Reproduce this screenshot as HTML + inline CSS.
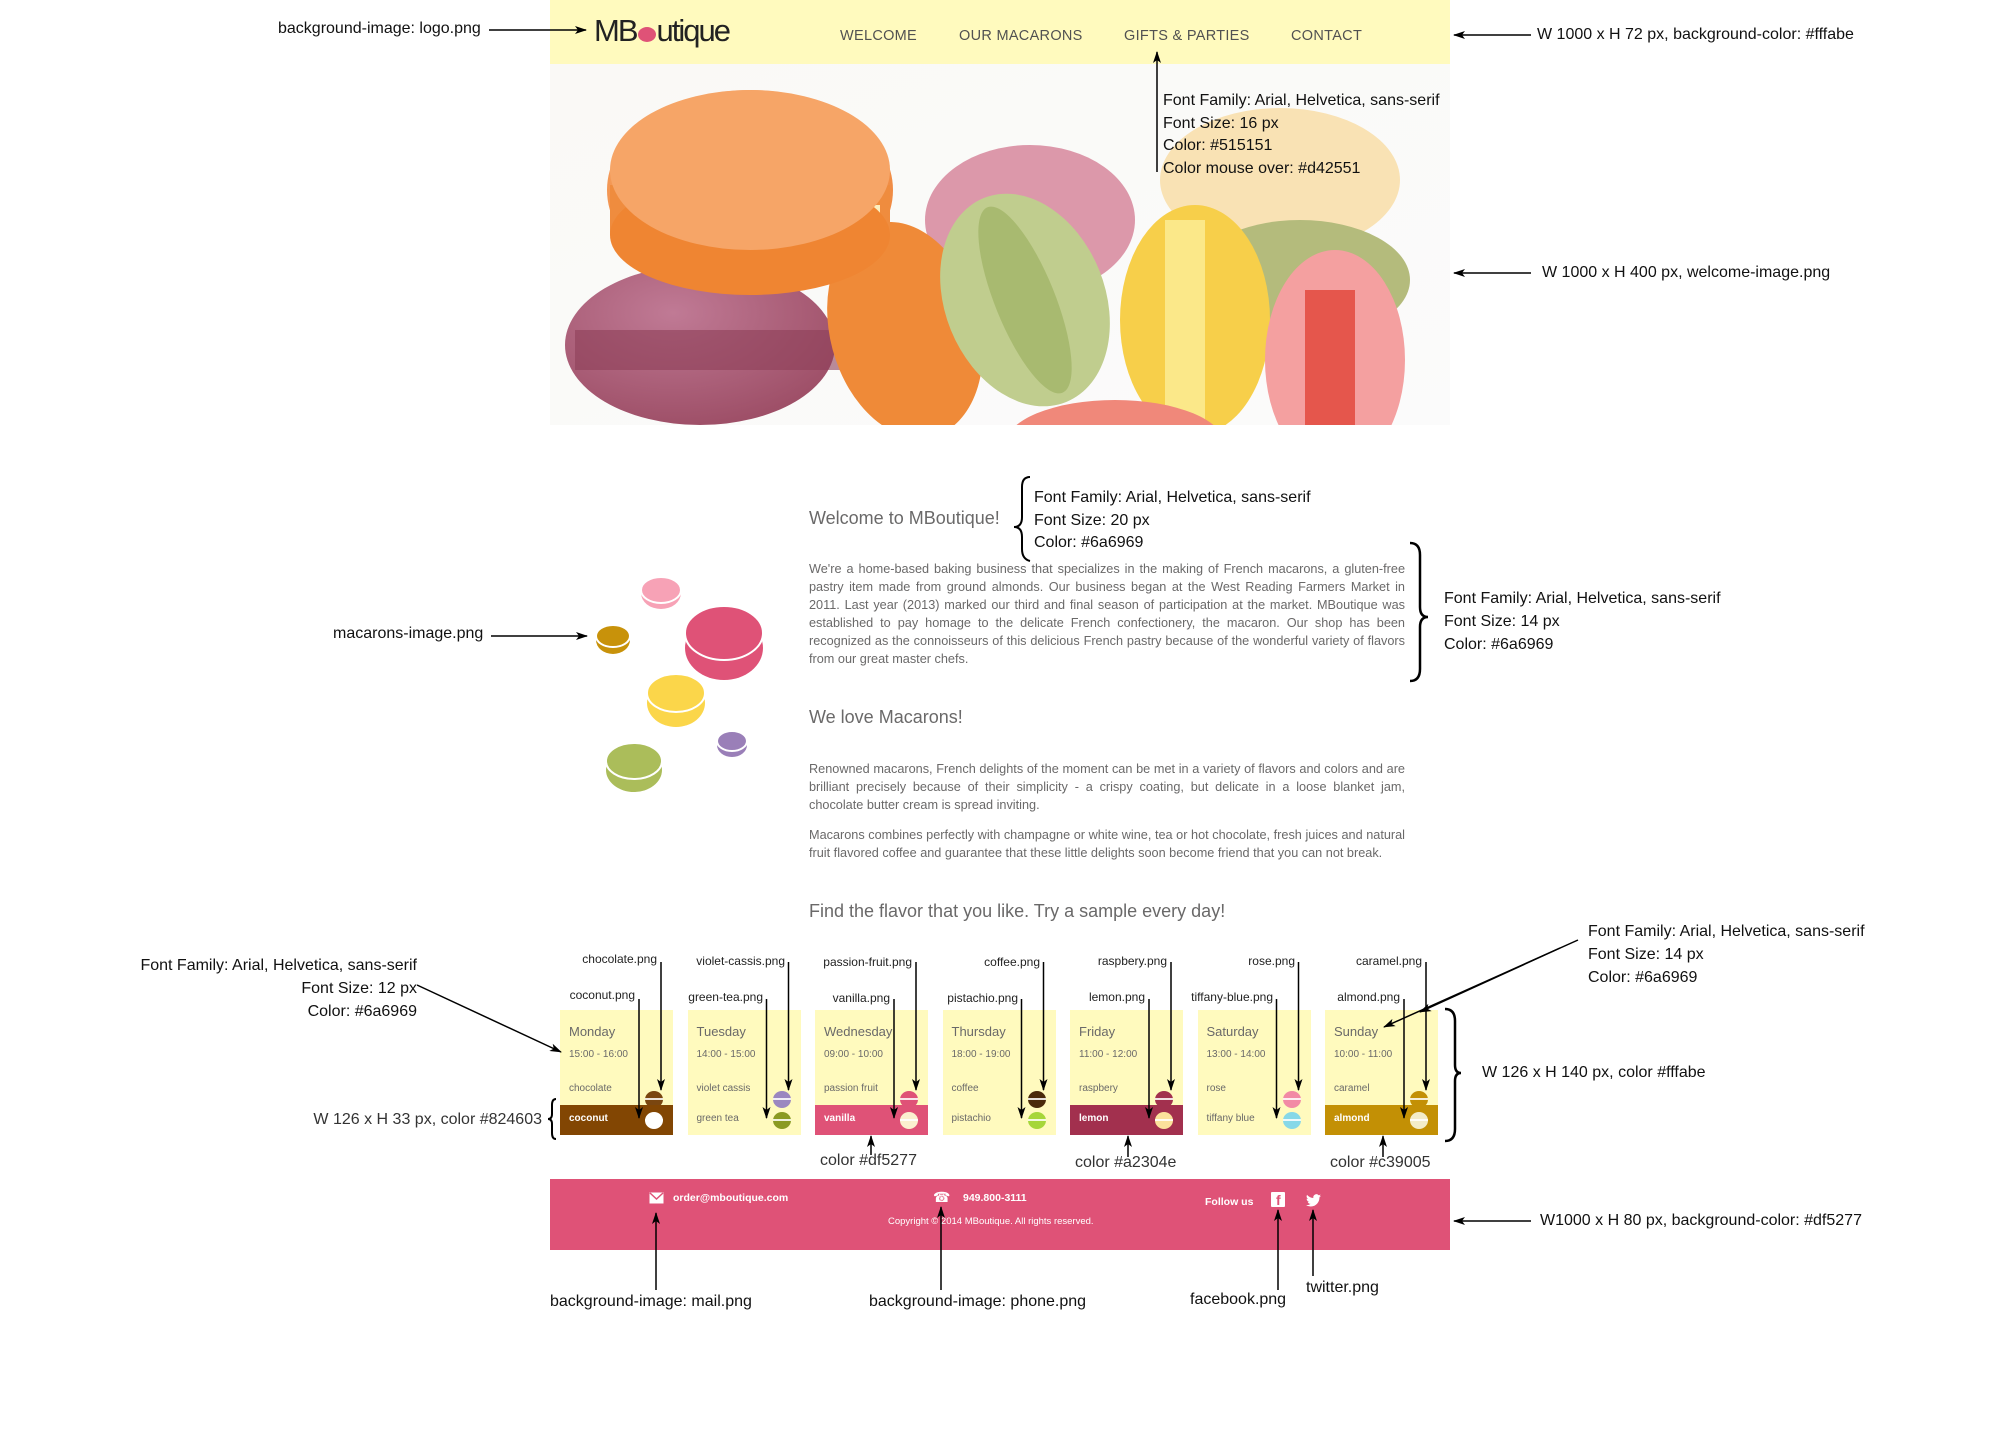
<!DOCTYPE html>
<html><head><meta charset="utf-8"><style>
*{margin:0;padding:0;box-sizing:border-box}
body{width:2000px;height:1440px;position:relative;background:#fff;font-family:"Liberation Sans",Arial,sans-serif;overflow:hidden}
.a{position:absolute;white-space:nowrap;color:#111;font-size:16px;line-height:20px}
.g{color:#6a6969}
.nav{position:absolute;top:28px;font-size:14.5px;color:#515151;letter-spacing:.3px}
p.t{position:absolute;left:809px;width:596px;font-size:12.7px;line-height:18px;color:#6a6969;text-align:justify}
.card{position:absolute;top:1010px;width:113px;height:125px;background:#fffabe;color:#6a6969}
.card .d{position:absolute;left:9px;top:14px;font-size:13px}
.card .h{position:absolute;left:9px;top:39px;font-size:10px}
.card .f1{position:absolute;left:9px;top:73px;font-size:10px}
.card .band{position:absolute;left:0;bottom:0;width:113px;height:30px}
.card .f2{position:absolute;left:9px;top:103px;font-size:10px}
.m{position:absolute;left:85px;width:18px;height:17px;border-radius:50%}
.m:after{content:"";position:absolute;left:0;right:0;top:7px;height:2px;background:rgba(255,255,255,.85)}
.lb{position:absolute;font-size:12px;color:#222;text-align:right;white-space:nowrap}
</style></head><body>

<!-- header -->
<div style="position:absolute;left:550px;top:0;width:900px;height:64px;background:#fffabe"></div>
<div class="a" style="left:594px;top:12px;font-size:31px;line-height:38px;color:#222;letter-spacing:-2px">MB<span style="display:inline-block;width:18px;height:15px;border-radius:50%;background:#df5277;vertical-align:-1px;margin:0 1px"></span>utique</div>
<div class="nav" style="left:840px">WELCOME</div>
<div class="nav" style="left:959px">OUR MACARONS</div>
<div class="nav" style="left:1124px">GIFTS &amp; PARTIES</div>
<div class="nav" style="left:1291px">CONTACT</div>

<!-- hero -->
<svg style="position:absolute;left:550px;top:64px" width="900" height="361" viewBox="550 64 900 361">
<defs>
<linearGradient id="bg" x1="0" y1="0" x2="1" y2="1"><stop offset="0" stop-color="#faf9f6"/><stop offset="1" stop-color="#fbfbfb"/></linearGradient>
<radialGradient id="or" cx=".4" cy=".3" r=".8"><stop offset="0" stop-color="#f9b27a"/><stop offset="1" stop-color="#ee8236"/></radialGradient>
<radialGradient id="pu" cx=".4" cy=".3" r=".8"><stop offset="0" stop-color="#c07a95"/><stop offset="1" stop-color="#9a4a62"/></radialGradient>
</defs>
<rect x="550" y="64" width="900" height="361" fill="url(#bg)"/>
<ellipse cx="1280" cy="180" rx="120" ry="72" fill="#f9e2b4"/>
<ellipse cx="1300" cy="280" rx="110" ry="60" fill="#b4bb7c"/>
<ellipse cx="1030" cy="220" rx="105" ry="75" fill="#dc98aa"/>
<ellipse cx="700" cy="345" rx="135" ry="80" fill="url(#pu)"/>
<rect x="575" y="330" width="265" height="40" fill="#8e3f59" opacity=".6"/>
<ellipse cx="905" cy="330" rx="75" ry="110" fill="#ef8a38" transform="rotate(-15 905 330)"/>
<ellipse cx="1025" cy="300" rx="80" ry="110" fill="#c0cd8e" transform="rotate(-22 1025 300)"/>
<ellipse cx="1025" cy="300" rx="30" ry="100" fill="#a8ba70" transform="rotate(-22 1025 300)"/>
<ellipse cx="1195" cy="320" rx="75" ry="115" fill="#f7cf4a"/>
<rect x="1165" y="220" width="40" height="205" fill="#fbe889"/>
<ellipse cx="1335" cy="360" rx="70" ry="110" fill="#f4a0a0"/>
<rect x="1305" y="290" width="50" height="135" fill="#e5564c"/>
<ellipse cx="1115" cy="445" rx="110" ry="45" fill="#f0887a"/>
<ellipse cx="750" cy="190" rx="143" ry="100" fill="url(#or)"/>
<rect x="610" y="185" width="280" height="50" fill="#ef8c3e"/>
<rect x="680" y="205" width="200" height="8" fill="#fbeec0"/>
<ellipse cx="750" cy="235" rx="140" ry="60" fill="#ef8532"/>
<ellipse cx="750" cy="170" rx="140" ry="80" fill="#f6a567"/>
</svg>

<!-- annotation text -->
<div class="a" style="left:278px;top:19px">background-image: logo.png</div>
<div class="a" style="left:1537px;top:25px">W 1000 x H 72 px, background-color: #fffabe</div>
<div class="a" style="left:1163px;top:90px;line-height:22.7px">Font Family: Arial, Helvetica, sans-serif<br>Font Size: 16 px<br>Color: #515151<br>Color mouse over: #d42551</div>
<div class="a" style="left:1542px;top:263px">W 1000 x H 400 px, welcome-image.png</div>
<div class="a" style="left:1034px;top:487px;line-height:22.5px">Font Family: Arial, Helvetica, sans-serif<br>Font Size: 20 px<br>Color: #6a6969</div>
<div class="a" style="left:1444px;top:587px;line-height:23px">Font Family: Arial, Helvetica, sans-serif<br>Font Size: 14 px<br>Color: #6a6969</div>
<div class="a" style="left:333px;top:624px">macarons-image.png</div>
<div class="a" style="left:140px;top:954px;width:277px;text-align:right;line-height:23px;white-space:normal">Font Family: Arial, Helvetica, sans-serif<br>Font Size: 12 px<br>Color: #6a6969</div>
<div class="a" style="left:312px;top:1110px;width:230px;text-align:right;color:#333">W 126 x H 33 px, color #824603</div>
<div class="a" style="left:1588px;top:920px;line-height:23px">Font Family: Arial, Helvetica, sans-serif<br>Font Size: 14 px<br>Color: #6a6969</div>
<div class="a" style="left:1482px;top:1063px">W 126 x H 140 px, color #fffabe</div>
<div class="a" style="left:820px;top:1151px;color:#333">color #df5277</div>
<div class="a" style="left:1075px;top:1153px;color:#333">color #a2304e</div>
<div class="a" style="left:1330px;top:1153px;color:#333">color #c39005</div>
<div class="a" style="left:1540px;top:1211px">W1000 x H 80 px, background-color: #df5277</div>
<div class="a" style="left:550px;top:1292px">background-image: mail.png</div>
<div class="a" style="left:869px;top:1292px">background-image: phone.png</div>
<div class="a" style="left:1190px;top:1290px">facebook.png</div>
<div class="a" style="left:1306px;top:1278px">twitter.png</div>

<!-- content -->
<div class="a g" style="left:809px;top:507px;font-size:18px;line-height:22px">Welcome to MBoutique!</div>
<p class="t" style="top:560px">We're a home-based baking business that specializes in the making of French macarons, a gluten-free pastry item made from ground almonds. Our business began at the West Reading Farmers Market in 2011. Last year (2013) marked our third and final season of participation at the market. MBoutique was established to pay homage to the delicate French confectionery, the macaron. Our shop has been recognized as the connoisseurs of this delicious French pastry because of the wonderful variety of flavors from our great master chefs.</p>
<div class="a g" style="left:809px;top:706px;font-size:18px;line-height:22px">We love Macarons!</div>
<p class="t" style="top:760px">Renowned macarons, French delights of the moment can be met in a variety of flavors and colors and are brilliant precisely because of their simplicity - a crispy coating, but delicate in a loose blanket jam, chocolate butter cream is spread inviting.</p>
<p class="t" style="top:826px">Macarons combines perfectly with champagne or white wine, tea or hot chocolate, fresh juices and natural fruit flavored coffee and guarantee that these little delights soon become friend that you can not break.</p>
<div class="a g" style="left:809px;top:900px;font-size:18px;line-height:22px">Find the flavor that you like. Try a sample every day!</div>

<!-- macarons image -->
<svg style="position:absolute;left:580px;top:560px" width="200" height="240" viewBox="580 560 200 240">
<ellipse cx="661" cy="593" rx="20" ry="16" fill="#f7a2b6"/><ellipse cx="661" cy="590" rx="20" ry="13" fill="#f7a2b6" stroke="#fff" stroke-width="2"/>
<ellipse cx="613" cy="640" rx="17" ry="14" fill="#c8920a"/><ellipse cx="613" cy="636" rx="17" ry="11" fill="#c8920a" stroke="#fff" stroke-width="2"/>
<ellipse cx="724" cy="648" rx="39" ry="32" fill="#df5277"/><ellipse cx="724" cy="633" rx="39" ry="27" fill="#df5277" stroke="#fff" stroke-width="2"/>
<ellipse cx="676" cy="703" rx="29" ry="24" fill="#fbd64a"/><ellipse cx="676" cy="693" rx="29" ry="19" fill="#fbd64a" stroke="#fff" stroke-width="2"/>
<ellipse cx="732" cy="745" rx="15" ry="12" fill="#9a7fb8"/><ellipse cx="732" cy="741" rx="15" ry="10" fill="#9a7fb8" stroke="#fff" stroke-width="2"/>
<ellipse cx="634" cy="770" rx="28" ry="22" fill="#abbd5a"/><ellipse cx="634" cy="761" rx="28" ry="18" fill="#abbd5a" stroke="#fff" stroke-width="2"/>
</svg>

<!-- cards -->
<div class="card" style="left:560px"><div class="d">Monday</div><div class="h">15:00 - 16:00</div><div class="f1">chocolate</div><div class="m" style="top:81px;background:#7a4610"></div><div class="band" style="background:#824603"></div><div class="f2" style="color:#fff;font-weight:bold">coconut</div><div class="m" style="top:102px;background:#fff"></div></div>
<div class="card" style="left:687.5px"><div class="d">Tuesday</div><div class="h">14:00 - 15:00</div><div class="f1">violet cassis</div><div class="m" style="top:81px;background:#9b87c0"></div><div class="f2">green tea</div><div class="m" style="top:102px;background:#8a9a23"></div></div>
<div class="card" style="left:815px"><div class="d">Wednesday</div><div class="h">09:00 - 10:00</div><div class="f1">passion fruit</div><div class="m" style="top:81px;background:#df5277"></div><div class="band" style="background:#df5277"></div><div class="f2" style="color:#fff;font-weight:bold">vanilla</div><div class="m" style="top:102px;background:#fbf0cf"></div></div>
<div class="card" style="left:942.5px"><div class="d">Thursday</div><div class="h">18:00 - 19:00</div><div class="f1">coffee</div><div class="m" style="top:81px;background:#4a2a0a"></div><div class="f2">pistachio</div><div class="m" style="top:102px;background:#a6d63a"></div></div>
<div class="card" style="left:1070px"><div class="d">Friday</div><div class="h">11:00 - 12:00</div><div class="f1">raspbery</div><div class="m" style="top:81px;background:#a2304e"></div><div class="band" style="background:#a2304e"></div><div class="f2" style="color:#fff;font-weight:bold">lemon</div><div class="m" style="top:102px;background:#fbe19b"></div></div>
<div class="card" style="left:1197.5px"><div class="d">Saturday</div><div class="h">13:00 - 14:00</div><div class="f1">rose</div><div class="m" style="top:81px;background:#f28aa5"></div><div class="f2">tiffany blue</div><div class="m" style="top:102px;background:#86d8e8"></div></div>
<div class="card" style="left:1325px"><div class="d">Sunday</div><div class="h">10:00 - 11:00</div><div class="f1">caramel</div><div class="m" style="top:81px;background:#c39005"></div><div class="band" style="background:#c39005"></div><div class="f2" style="color:#fff;font-weight:bold">almond</div><div class="m" style="top:102px;background:#f3ecc9"></div></div>

<!-- card labels -->
<div class="lb" style="right:1343px;top:952px">chocolate.png</div><div class="lb" style="right:1365px;top:988px">coconut.png</div>
<div class="lb" style="right:1215px;top:954px">violet-cassis.png</div><div class="lb" style="right:1237px;top:990px">green-tea.png</div>
<div class="lb" style="right:1088px;top:955px">passion-fruit.png</div><div class="lb" style="right:1110px;top:991px">vanilla.png</div>
<div class="lb" style="right:960px;top:955px">coffee.png</div><div class="lb" style="right:982px;top:991px">pistachio.png</div>
<div class="lb" style="right:833px;top:954px">raspbery.png</div><div class="lb" style="right:855px;top:990px">lemon.png</div>
<div class="lb" style="right:705px;top:954px">rose.png</div><div class="lb" style="right:727px;top:990px">tiffany-blue.png</div>
<div class="lb" style="right:578px;top:954px">caramel.png</div><div class="lb" style="right:600px;top:990px">almond.png</div>

<!-- footer -->
<div style="position:absolute;left:550px;top:1179px;width:900px;height:71px;background:#df5277"></div>
<svg style="position:absolute;left:649px;top:1192px" width="15" height="12"><rect x="0.5" y="0.5" width="14" height="11" fill="#fff"/><path d="M1 1 L7.5 7 L14 1" stroke="#df5277" fill="none" stroke-width="1.5"/></svg>
<div class="a" style="left:673px;top:1192px;font-size:10.5px;line-height:13px;color:#fff;font-weight:bold">order@mboutique.com</div>
<div class="a" style="left:933px;top:1190px;font-size:14px;line-height:15px;color:#fff">☎</div>
<div class="a" style="left:963px;top:1192px;font-size:10.5px;line-height:13px;color:#fff;font-weight:bold">949.800-3111</div>
<div class="a" style="left:888px;top:1216px;font-size:9.5px;line-height:12px;color:#fff">Copyright © 2014 MBoutique. All rights reserved.</div>
<div class="a" style="left:1205px;top:1196px;font-size:10.5px;line-height:13px;color:#fff;font-weight:bold">Follow us</div>
<div style="position:absolute;left:1271px;top:1192px;width:14px;height:15px;background:#fff;border-radius:1px"><span style="position:absolute;left:5px;top:0;font:bold 14px 'Liberation Sans';color:#df5277;line-height:17px">f</span></div>
<svg style="position:absolute;left:1306px;top:1194px" width="15" height="13" viewBox="0 0 24 20"><path fill="#fff" d="M24 2.4a9.8 9.8 0 0 1-2.8.8A4.9 4.9 0 0 0 23.3.4a9.9 9.9 0 0 1-3.1 1.2A4.9 4.9 0 0 0 11.8 6 14 14 0 0 1 1.7.9a4.9 4.9 0 0 0 1.5 6.6A4.9 4.9 0 0 1 1 6.9 4.9 4.9 0 0 0 4.9 11.8a4.9 4.9 0 0 1-2.2.1 4.9 4.9 0 0 0 4.6 3.4A9.9 9.9 0 0 1 0 17.3 14 14 0 0 0 7.5 19.5c9.1 0 14-7.5 14-14v-.6A10 10 0 0 0 24 2.4z"/></svg>

<!-- annotation overlay lines (on top) -->
<svg style="position:absolute;left:0;top:0;z-index:10" width="2000" height="1440" fill="none" stroke="#000" stroke-width="1.5">
<defs><marker id="ar" markerWidth="12" markerHeight="8" refX="11" refY="4" orient="auto" markerUnits="userSpaceOnUse"><path d="M0,0 L12,4 L0,8 L3,4 Z" fill="#000" stroke="none"/></marker></defs>
<line x1="489" y1="30" x2="586" y2="30" marker-end="url(#ar)"/>
<line x1="1531" y1="35" x2="1454" y2="35" marker-end="url(#ar)"/>
<line x1="1157" y1="172" x2="1157" y2="52" marker-end="url(#ar)"/>
<line x1="1531" y1="273" x2="1454" y2="273" marker-end="url(#ar)"/>
<line x1="491" y1="636" x2="587" y2="636" marker-end="url(#ar)"/>
<path d="M1030 477 q-8 0 -8 10 v30 q0 10 -8 10 q8 0 8 10 v12 q0 10 8 12" stroke-width="2"/>
<path d="M1410 543 q10 0 10 12 v52 q0 10 8 10 q-8 0 -8 10 v42 q0 12 -10 12" stroke-width="2.5"/>
<line x1="417" y1="985" x2="561" y2="1052" marker-end="url(#ar)"/>
<line x1="1578" y1="940" x2="1384" y2="1027" marker-end="url(#ar)"/>
<line x1="1560" y1="948" x2="1420" y2="1012" marker-end="url(#ar)"/>
<path d="M556 1099 q-4 0 -4 6 v9 q0 5 -4 5 q4 0 4 5 v9 q0 6 4 6" stroke-width="2"/>
<path d="M1445 1009 q10 0 10 12 v44 q0 8 6 8 q-6 0 -6 8 v48 q0 12 -10 12" stroke-width="2.5"/>
<line x1="871" y1="1155" x2="871" y2="1136" marker-end="url(#ar)"/>
<line x1="1128" y1="1157" x2="1128" y2="1136" marker-end="url(#ar)"/>
<line x1="1383" y1="1157" x2="1383" y2="1136" marker-end="url(#ar)"/>
<line x1="656" y1="1290" x2="656" y2="1213" marker-end="url(#ar)"/>
<line x1="941" y1="1290" x2="941" y2="1207" marker-end="url(#ar)"/>
<line x1="1278" y1="1290" x2="1278" y2="1210" marker-end="url(#ar)"/>
<line x1="1313" y1="1276" x2="1313" y2="1210" marker-end="url(#ar)"/>
<line x1="1531" y1="1221" x2="1454" y2="1221" marker-end="url(#ar)"/>
<g>
<line x1="661" y1="962" x2="661" y2="1090" marker-end="url(#ar)"/><line x1="639" y1="999" x2="639" y2="1118" marker-end="url(#ar)"/>
<line x1="788.5" y1="962" x2="788.5" y2="1090" marker-end="url(#ar)"/><line x1="766.5" y1="999" x2="766.5" y2="1118" marker-end="url(#ar)"/>
<line x1="916" y1="962" x2="916" y2="1090" marker-end="url(#ar)"/><line x1="894" y1="999" x2="894" y2="1118" marker-end="url(#ar)"/>
<line x1="1043.5" y1="962" x2="1043.5" y2="1090" marker-end="url(#ar)"/><line x1="1021.5" y1="999" x2="1021.5" y2="1118" marker-end="url(#ar)"/>
<line x1="1171" y1="962" x2="1171" y2="1090" marker-end="url(#ar)"/><line x1="1149" y1="999" x2="1149" y2="1118" marker-end="url(#ar)"/>
<line x1="1298.5" y1="962" x2="1298.5" y2="1090" marker-end="url(#ar)"/><line x1="1276.5" y1="999" x2="1276.5" y2="1118" marker-end="url(#ar)"/>
<line x1="1426" y1="962" x2="1426" y2="1090" marker-end="url(#ar)"/><line x1="1404" y1="999" x2="1404" y2="1118" marker-end="url(#ar)"/>
</g>
</svg>

</body></html>
